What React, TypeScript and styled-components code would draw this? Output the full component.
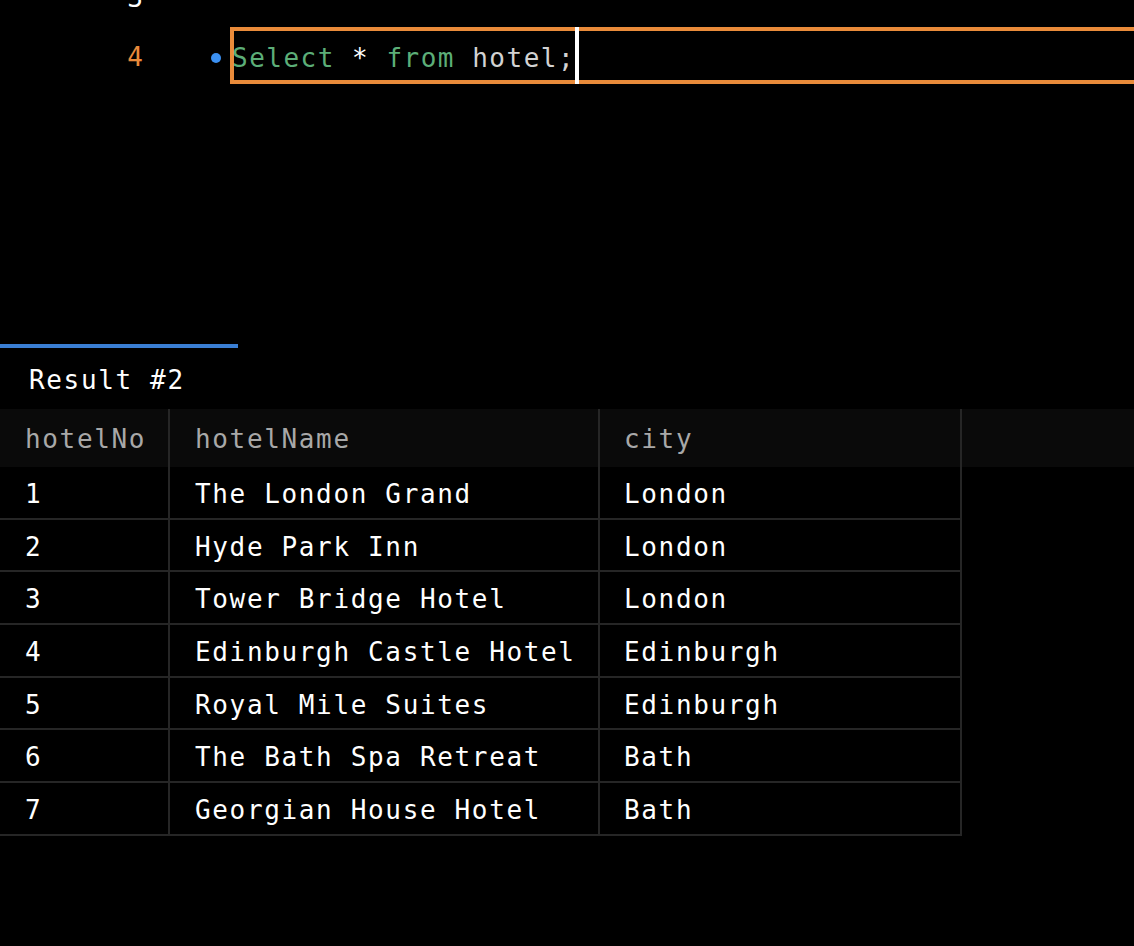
import React from "react";
import styled, { createGlobalStyle } from "styled-components";

const Global = createGlobalStyle`
  html, body {
    margin: 0;
    padding: 0;
    background: #000;
  }
  body {
    width: 1134px;
    height: 946px;
    overflow: hidden;
    font-family: "DejaVu Sans Mono", "Liberation Mono", monospace;
  }
`;

const Page = styled.div`
  width: 1134px;
  height: 946px;
  background: #000;
  color: #fff;
  font-family: "DejaVu Sans Mono", "Liberation Mono", monospace;
  font-size: 26px;
  letter-spacing: 1.65px;
  overflow: hidden;
`;

const Editor = styled.div`
  height: 344px;
  overflow: hidden;
`;

const Lines = styled.div`
  margin-top: -32px;
  display: flex;
  flex-direction: column;
`;

const Line = styled.div`
  display: flex;
  align-items: flex-start;
  height: 59px;
`;

const LineNo = styled.div<{ $active?: boolean }>`
  width: 143px;
  flex: none;
  text-align: right;
  padding-top: 4px;
  line-height: 53px;
  letter-spacing: 0;
  color: ${(p) => (p.$active ? "#e8893b" : "#ffffff")};
`;

const Marker = styled.div`
  width: 87px;
  flex: none;
  height: 57px;
  display: flex;
  align-items: center;
  justify-content: flex-end;
  padding-right: 9px;
  box-sizing: border-box;
`;

const Dot = styled.span`
  width: 10px;
  height: 10px;
  border-radius: 50%;
  background: #3b90f2;
  margin-top: 4px;
`;

const CodeBox = styled.div`
  flex: 1;
  height: 57px;
  box-sizing: border-box;
  border: 4px solid #e98b3a;
  border-right: none;
  display: flex;
  align-items: flex-start;
  white-space: pre;
`;

const CodeText = styled.span`
  padding-top: 5px;
  line-height: 44px;
  margin-left: -2px;
  letter-spacing: 1.5px;
`;

const Kw = styled.span`
  color: #5cae78;
`;

const Op = styled.span`
  color: #ffffff;
`;

const Ident = styled.span`
  color: #d2d2d2;
`;

const Cursor = styled.span`
  width: 4px;
  flex: none;
  align-self: stretch;
  margin: -4px 0;
  background: #ffffff;
`;

const Tabs = styled.div`
  display: flex;
  height: 65px;
`;

const Tab = styled.div`
  width: 238px;
  box-sizing: border-box;
  border-top: 4px solid #3a7ed3;
  padding: 3px 0 0 29px;
  line-height: 58px;
  color: #ffffff;
`;

const Grid = styled.div`
  display: grid;
  grid-template-columns: 170px 430px 362px 1fr;
`;

const HeadCell = styled.div<{ $pad?: number; $fill?: boolean }>`
  height: 58px;
  box-sizing: border-box;
  background: #0a0a0a;
  color: #a8a8a8;
  padding-top: 2px;
  line-height: 56px;
  padding-left: ${(p) => p.$pad ?? 25}px;
  border-right: ${(p) => (p.$fill ? "none" : "2px solid #262626")};
`;

const Cell = styled.div<{ $pad?: number }>`
  height: 52.67px;
  box-sizing: border-box;
  padding: 4px 0 0 ${(p) => p.$pad ?? 25}px;
  line-height: 46.67px;
  color: #ffffff;
  border-right: 2px solid #262626;
  border-bottom: 2px solid #262626;
  white-space: pre;
`;

const Empty = styled.div``;

const columns = [
  { key: "hotelNo", pad: 25 },
  { key: "hotelName", pad: 25 },
  { key: "city", pad: 24 },
];

const rows: [string, string, string][] = [
  ["1", "The London Grand", "London"],
  ["2", "Hyde Park Inn", "London"],
  ["3", "Tower Bridge Hotel", "London"],
  ["4", "Edinburgh Castle Hotel", "Edinburgh"],
  ["5", "Royal Mile Suites", "Edinburgh"],
  ["6", "The Bath Spa Retreat", "Bath"],
  ["7", "Georgian House Hotel", "Bath"],
];

export default function App() {
  return (
    <>
      <Global />
      <Page>
        <Editor>
          <Lines>
            <Line>
              <LineNo>3</LineNo>
              <Marker />
            </Line>
            <Line>
              <LineNo $active>4</LineNo>
              <Marker>
                <Dot />
              </Marker>
              <CodeBox>
                <CodeText>
                  <Kw>Select</Kw> <Op>*</Op> <Kw>from</Kw> <Ident>hotel;</Ident>
                </CodeText>
                <Cursor />
              </CodeBox>
            </Line>
          </Lines>
        </Editor>
        <Tabs>
          <Tab>Result #2</Tab>
        </Tabs>
        <Grid>
          {columns.map((c) => (
            <HeadCell key={c.key} $pad={c.pad}>
              {c.key}
            </HeadCell>
          ))}
          <HeadCell $fill />
          {rows.map((r) => (
            <React.Fragment key={r[0]}>
              {r.map((v, i) => (
                <Cell key={i} $pad={columns[i].pad}>
                  {v}
                </Cell>
              ))}
              <Empty />
            </React.Fragment>
          ))}
        </Grid>
      </Page>
    </>
  );
}
